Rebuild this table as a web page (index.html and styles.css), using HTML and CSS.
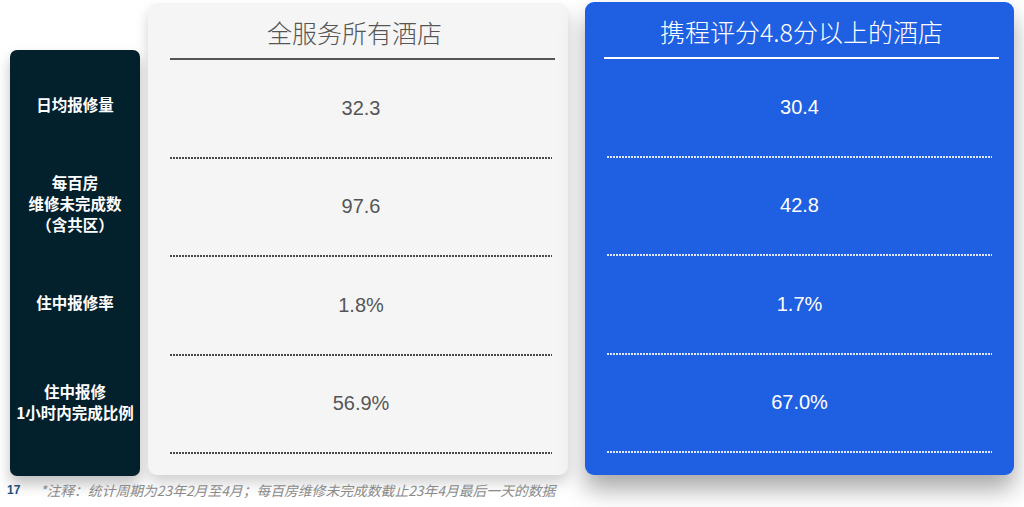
FILE: index.html
```html
<!DOCTYPE html>
<html lang="zh">
<head>
<meta charset="utf-8">
<link rel="stylesheet" href="styles.css">
</head>
<body>
<div class="page">
  <div class="board">
    <div class="labels">
      <div class="label">日均报修量</div>
      <div class="label">每百房<br>维修未完成数<br>（含共区）</div>
      <div class="label">住中报修率</div>
      <div class="label">住中报修<br>1小时内完成比例</div>
    </div>
    <div class="card card-grey">
      <div class="title">全服务所有酒店</div>
      <div class="row">32.3</div>
      <div class="row">97.6</div>
      <div class="row">1.8%</div>
      <div class="row">56.9%</div>
    </div>
    <div class="card card-blue">
      <div class="title">携程评分4.8分以上的酒店</div>
      <div class="row">30.4</div>
      <div class="row">42.8</div>
      <div class="row">1.7%</div>
      <div class="row">67.0%</div>
    </div>
  </div>
  <div class="footer">
    <span class="pageno">17</span>
    <span class="note">*注释：统计周期为23年2月至4月；每百房维修未完成数截止23年4月最后一天的数据</span>
  </div>
</div>
</body>
</html>
```
FILE: styles.css
```css
html, body {
  margin: 0;
  padding: 0;
  background: #ffffff;
}
body {
  width: 1024px;
  height: 507px;
  overflow: hidden;
  font-family: "Liberation Sans", "Noto Sans CJK SC", sans-serif;
}
.page {
  display: flex;
  flex-direction: column;
}
.board {
  display: flex;
  align-items: flex-start;
  padding-left: 10px;
}
.labels {
  margin-top: 50px;
  width: 130px;
  height: 426px;
  box-sizing: border-box;
  padding-top: 5px;
  background: #03202d;
  border-radius: 7px;
  box-shadow: 0 8px 14px rgba(0,0,0,0.25);
  display: flex;
  flex-direction: column;
}
.label {
  height: 99px;
  display: flex;
  align-items: center;
  justify-content: center;
  text-align: center;
  color: #ffffff;
  font-family: "Noto Sans CJK SC", sans-serif;
  font-weight: 700;
  font-size: 15.5px;
  line-height: 21px;
}
.card {
  box-sizing: border-box;
  border-radius: 9px;
  display: flex;
  flex-direction: column;
}
.card-grey {
  margin-left: 8px;
  margin-top: 3px;
  width: 420px;
  height: 472px;
  background: #f5f5f5;
  padding: 0 13px 0 22px;
  color: #555555;
  box-shadow: 0 8px 14px rgba(0,0,0,0.18);
}
.card-blue {
  margin-left: 17px;
  margin-top: 2px;
  width: 429px;
  height: 473px;
  background: #1f5fe1;
  padding: 0 22px 0 19px;
  color: #ffffff;
  box-shadow: 0 14px 24px rgba(0,0,0,0.35);
}
.title {
  height: 53px;
  display: flex;
  align-items: center;
  justify-content: center;
  padding-top: 2px;
  font-family: "Noto Sans CJK SC", sans-serif;
  font-size: 25px;
  font-weight: 300;
  border-bottom: 2px solid #555555;
}
.card-grey .title {
  padding-right: 16px;
}
.card-blue .title {
  border-bottom-color: #ffffff;
  margin-right: -7px;
}
.row {
  position: relative;
  height: 98.5px;
  box-sizing: border-box;
  display: flex;
  align-items: center;
  justify-content: center;
  font-family: "Liberation Sans", "Noto Sans CJK SC", sans-serif;
  font-size: 20px;
  margin-right: 3px;
  padding-bottom: 2px;
}
.row::after {
  content: "";
  position: absolute;
  left: 0;
  right: 0;
  bottom: 0;
  height: 2px;
  background: repeating-linear-gradient(to right, #4a4a4a 0 2px, transparent 2px 3px);
}
.card-blue .row {
  margin-left: 3px;
  margin-right: 0;
}
.card-blue .row::after {
  background: repeating-linear-gradient(to right, rgba(255,255,255,0.85) 0 2px, transparent 2px 3px);
}
.footer {
  display: flex;
  align-items: center;
  height: 28px;
  padding-left: 7px;
}
.pageno {
  color: #1d4f7e;
  font-weight: 700;
  font-size: 12px;
  width: 33px;
}
.note {
  color: #8a8a8a;
  font-style: italic;
  font-size: 13.8px;
  font-family: "Noto Sans CJK SC", sans-serif;
}
```
